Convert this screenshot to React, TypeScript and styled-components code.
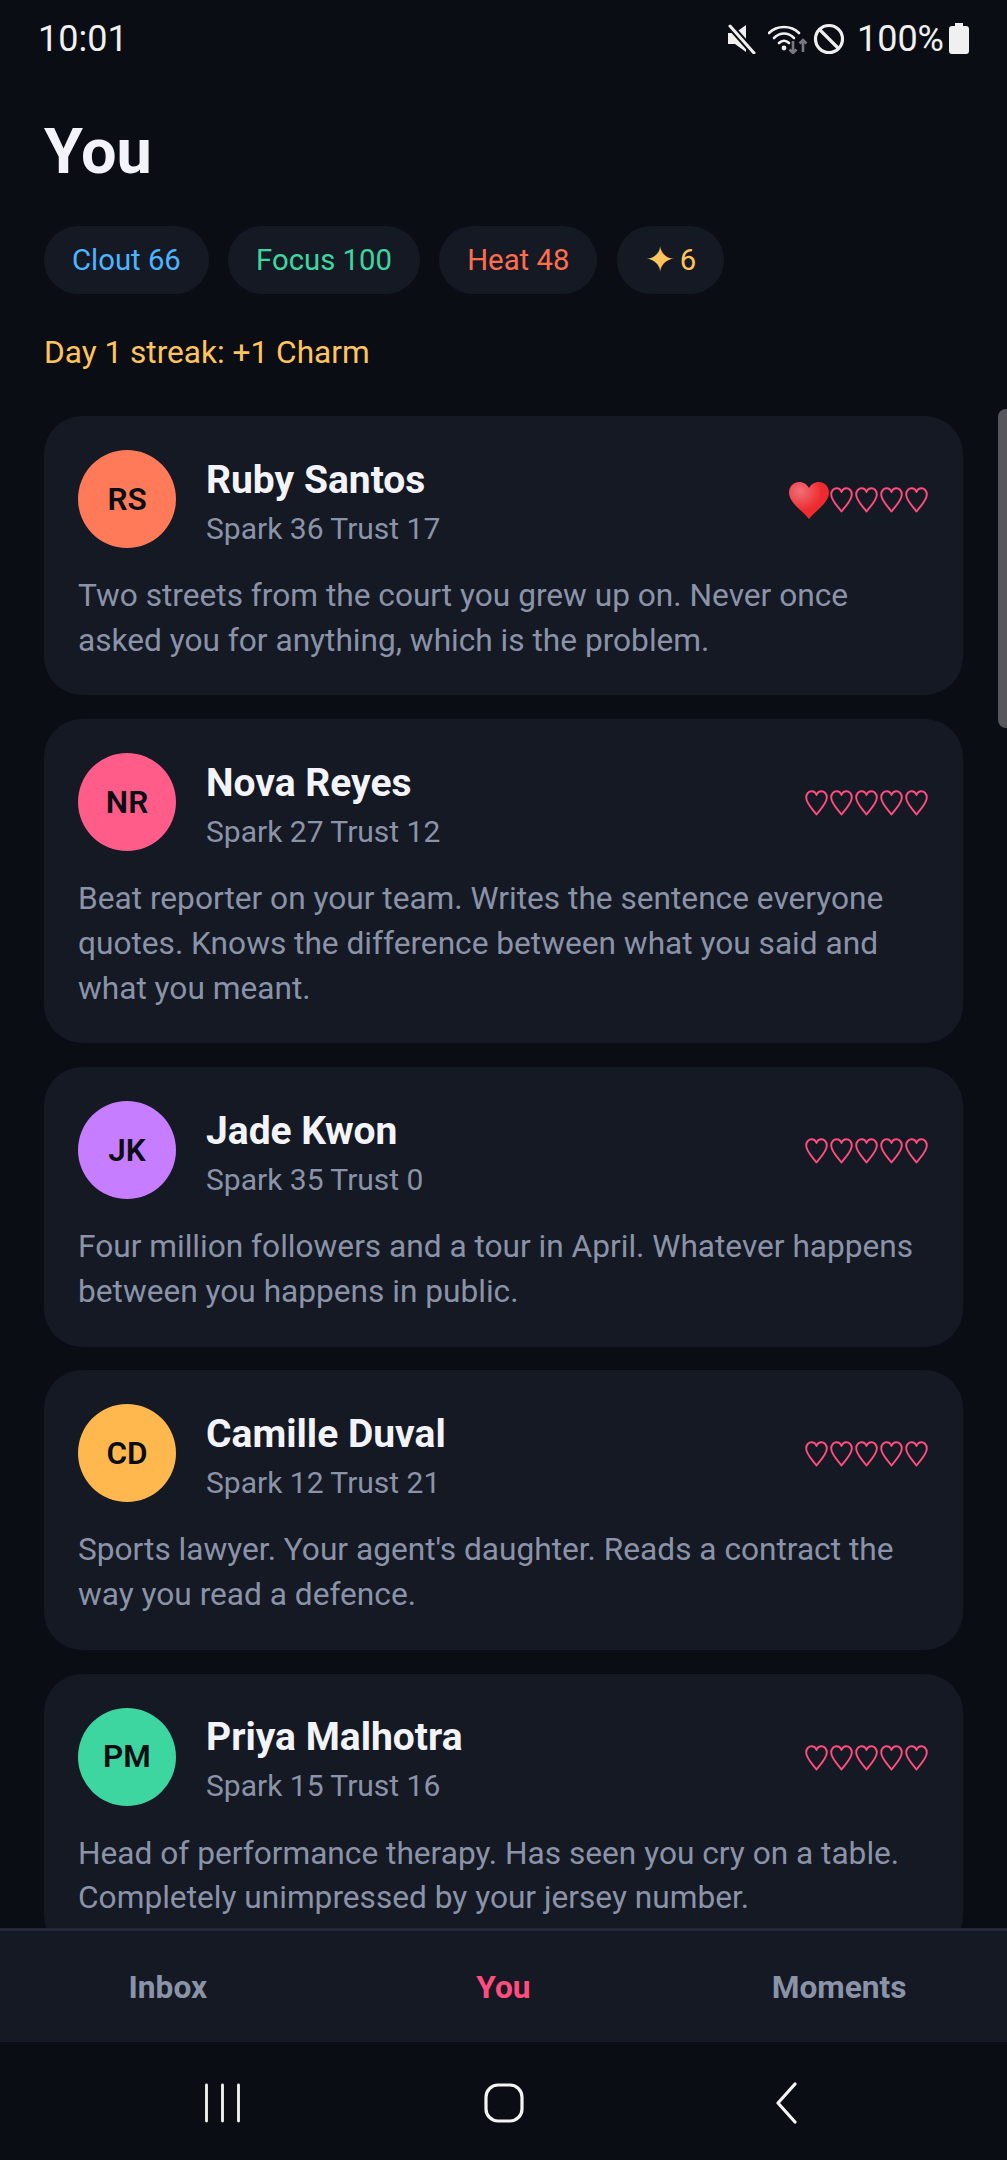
import React from "react";
import styled, { createGlobalStyle } from "styled-components";

const Global = createGlobalStyle`
  html, body { margin: 0; padding: 0; background: #0a0d14; }
  #root { height: 2160px; }
  * { box-sizing: border-box; }
`;

const Screen = styled.div`
  position: relative;
  height: 2160px;
  display: flex;
  flex-direction: column;
  background: #0a0d14;
  font-family: Roboto, "Liberation Sans", sans-serif;
  overflow: hidden;
`;

const StatusBar = styled.div`
  flex: none;
  height: 76px;
  padding: 1px 38px 0 38px;
  display: flex;
  align-items: center;
  justify-content: space-between;
  color: #f0f0f0;
  font-size: 36px;
`;

const StatusRight = styled.div`
  display: flex;
  align-items: center;
`;

const StatusPct = styled.span`
  margin: 0 5px 0 12px;
`;

const Scroll = styled.div`
  flex: 1;
  min-height: 0;
  overflow: hidden;
  padding: 0 44px 0 44px;
`;

const Title = styled.h1`
  margin: 41px 0 0;
  font-size: 63px;
  line-height: 70px;
  font-weight: 700;
  color: #f2f4fa;
`;

const Chips = styled.div`
  margin-top: 39px;
  display: flex;
  gap: 19.25px;
`;

const Chip = styled.div<{ $color: string }>`
  height: 68px;
  padding: 0 28px;
  border-radius: 34px;
  background: #151924;
  color: ${(p) => p.$color};
  font-size: 29.3px;
  display: flex;
  align-items: center;
`;

const Star = styled.span`
  font-size: 36px;
  line-height: 40px;
  margin-right: 5px;
`;

const Streak = styled.div`
  margin-top: 39px;
  color: #ffc45c;
  font-size: 31.6px;
  line-height: 40px;
`;

const Cards = styled.div`
  margin-top: 43px;
  display: flex;
  flex-direction: column;
  gap: 23.8px;
`;

const Card = styled.div`
  padding: 34px 34px 32px;
  background: #151924;
  border-radius: 38px;
`;

const CardHead = styled.div`
  display: flex;
  align-items: center;
  height: 98px;
`;

const Avatar = styled.div<{ $color: string }>`
  flex: none;
  width: 98px;
  height: 98px;
  border-radius: 50%;
  margin-right: 30px;
  background: ${(p) => p.$color};
  color: #0a0d14;
  font-size: 31.5px;
  font-weight: 600;
  display: flex;
  align-items: center;
  justify-content: center;
`;

const Who = styled.div`
  flex: 1;
  min-width: 0;
  padding-top: 6px;
`;

const Name = styled.div`
  color: #f2f4fa;
  font-size: 39px;
  line-height: 48px;
  font-weight: 700;
`;

const Stats = styled.div`
  color: #8a93a8;
  font-size: 30px;
  line-height: 40px;
  margin-top: 5px;
`;

const Hearts = styled.div`
  display: flex;
  align-items: center;
  gap: 2px;
  padding: 2px 1px 0 0;
`;

const Desc = styled.p`
  margin: 26px 0 0;
  color: #8a93a8;
  font-size: 31.65px;
  line-height: 44.7px;
`;

const ScrollThumb = styled.div`
  position: absolute;
  right: 0;
  top: 409px;
  width: 9px;
  height: 319px;
  background: #55575c;
  border-radius: 8px 0 0 8px;
`;

const Tabs = styled.div`
  flex: none;
  height: 114px;
  padding-top: 2px;
  display: grid;
  grid-template-columns: repeat(3, 1fr);
  align-items: center;
  background: #151924;
  border-top: 3px solid #222a3a;
`;

const Tab = styled.div<{ $active?: boolean }>`
  text-align: center;
  font-size: 31.7px;
  font-weight: 700;
  color: ${(p) => (p.$active ? "#ff4d7e" : "#8a93a8")};
`;

const SystemNav = styled.div`
  flex: none;
  height: 118px;
  display: flex;
  align-items: center;
  padding: 4px 0 0 204px;
`;

const NavRecents = styled.svg`
  margin-right: 244px;
`;

const NavHome = styled.svg`
  margin-right: 251px;
`;

const OutlineHeart = () => (
  <svg width="23" height="26" viewBox="0 0 23 26" fill="none">
    <path
      d="M11.5 24.5C8 19.5 1.2 13.5 1.2 7.5C1.2 3.8 3.7 1.3 6.6 1.3C8.8 1.3 10.6 2.6 11.5 5C12.4 2.6 14.2 1.3 16.4 1.3C19.3 1.3 21.8 3.8 21.8 7.5C21.8 13.5 15 19.5 11.5 24.5Z"
      stroke="#ff4d7e"
      strokeWidth="1.9"
      strokeLinejoin="round"
    />
  </svg>
);

const FullHeart = () => (
  <svg width="40" height="37" viewBox="0 0 40 37" style={{ marginRight: -1 }}>
    <defs>
      <radialGradient id="hg" cx="0.28" cy="0.25" r="0.55">
        <stop offset="0" stopColor="#ef6f78" />
        <stop offset="1" stopColor="#ee2a2e" />
      </radialGradient>
    </defs>
    <path
      d="M20 37C15 30 0 21 0 10.5C0 4.5 4.6 0 10.3 0C14.5 0 18 2.3 20 6C22 2.3 25.5 0 29.7 0C35.4 0 40 4.5 40 10.5C40 21 25 30 20 37Z"
      fill="url(#hg)"
    />
  </svg>
);

const people = [
  { i: "RS", c: "#ff7a59", n: "Ruby Santos", s: "Spark 36 Trust 17", f: 1, d: "Two streets from the court you grew up on. Never once asked you for anything, which is the problem." },
  { i: "NR", c: "#ff5c8a", n: "Nova Reyes", s: "Spark 27 Trust 12", f: 0, d: "Beat reporter on your team. Writes the sentence everyone quotes. Knows the difference between what you said and what you meant." },
  { i: "JK", c: "#c77dff", n: "Jade Kwon", s: "Spark 35 Trust 0", f: 0, d: "Four million followers and a tour in April. Whatever happens between you happens in public." },
  { i: "CD", c: "#ffb84d", n: "Camille Duval", s: "Spark 12 Trust 21", f: 0, d: "Sports lawyer. Your agent's daughter. Reads a contract the way you read a defence." },
  { i: "PM", c: "#3dd6a0", n: "Priya Malhotra", s: "Spark 15 Trust 16", f: 0, d: "Head of performance therapy. Has seen you cry on a table. Completely unimpressed by your jersey number." },
];

export default function App() {
  return (
    <Screen>
      <Global />
      <StatusBar>
        <span>10:01</span>
        <StatusRight>
          <svg width="30" height="30" viewBox="0 0 30 30" style={{ marginRight: 11 }}>
            <path d="M1 9h7l11-8v27l-11-8H1z" fill="#f0f0f0" />
            <path d="M3 2l24 27" stroke="#0a0d14" strokeWidth="7" />
            <path d="M3 2l24 27" stroke="#f0f0f0" strokeWidth="3" strokeLinecap="round" />
          </svg>
          <svg width="40" height="30" viewBox="0 0 40 30" fill="none" style={{ marginRight: 5 }}>
            <path d="M1 9C9 1 23 1 31 9" stroke="#f0f0f0" strokeWidth="2.6" strokeLinecap="round" />
            <path d="M6 14C12 8 20 8 26 14" stroke="#f0f0f0" strokeWidth="2.6" strokeLinecap="round" />
            <path d="M11 19C14 16 18 16 21 19" stroke="#f0f0f0" strokeWidth="2.6" strokeLinecap="round" />
            <circle cx="16" cy="24" r="2.4" fill="#f0f0f0" />
            <path d="M25 17v12M21.5 25.5l3.5 3.5 3.5-3.5" stroke="#77797d" strokeWidth="2.6" />
            <path d="M35 28V16M31.5 19.5l3.5-3.5 3.5 3.5" stroke="#77797d" strokeWidth="2.6" />
          </svg>
          <svg width="32" height="32" viewBox="0 0 32 32" fill="none">
            <circle cx="16" cy="16" r="13.5" stroke="#f0f0f0" strokeWidth="3.2" />
            <path d="M6.5 6.5l19 19" stroke="#f0f0f0" strokeWidth="3.2" />
          </svg>
          <StatusPct>100%</StatusPct>
          <svg width="20" height="31" viewBox="0 0 20 31">
            <path d="M6 0h8v3h3a3 3 0 0 1 3 3v22a3 3 0 0 1-3 3H3a3 3 0 0 1-3-3V6a3 3 0 0 1 3-3h3z" fill="#f0f0f0" />
          </svg>
        </StatusRight>
      </StatusBar>
      <Scroll>
        <Title>You</Title>
        <Chips>
          <Chip $color="#4db4ff">Clout 66</Chip>
          <Chip $color="#3dd6a0">Focus 100</Chip>
          <Chip $color="#ff6f4d">Heat 48</Chip>
          <Chip $color="#ffc45c"><Star>✦</Star>6</Chip>
        </Chips>
        <Streak>Day 1 streak: +1 Charm</Streak>
        <Cards>
          {people.map((p) => (
            <Card key={p.i}>
              <CardHead>
                <Avatar $color={p.c}>{p.i}</Avatar>
                <Who>
                  <Name>{p.n}</Name>
                  <Stats>{p.s}</Stats>
                </Who>
                <Hearts>
                  {p.f ? <FullHeart /> : <OutlineHeart />}
                  <OutlineHeart />
                  <OutlineHeart />
                  <OutlineHeart />
                  <OutlineHeart />
                </Hearts>
              </CardHead>
              <Desc>{p.d}</Desc>
            </Card>
          ))}
        </Cards>
      </Scroll>
      <ScrollThumb />
      <Tabs>
        <Tab>Inbox</Tab>
        <Tab $active>You</Tab>
        <Tab>Moments</Tab>
      </Tabs>
      <SystemNav>
        <NavRecents width="36" height="40" viewBox="0 0 36 40" stroke="#f5f5f5" strokeWidth="2.8" strokeLinecap="round">
          <path d="M2.5 2v36M18.5 2v36M34.5 2v36" />
        </NavRecents>
        <NavHome width="40" height="40" viewBox="0 0 40 40" fill="none" stroke="#f5f5f5" strokeWidth="3.2">
          <rect x="2" y="2" width="36" height="36" rx="12" />
        </NavHome>
        <svg width="22" height="42" viewBox="0 0 22 42" fill="none" stroke="#f5f5f5" strokeWidth="3.2" strokeLinecap="round" strokeLinejoin="round">
          <path d="M20 2L3 21l17 19" />
        </svg>
      </SystemNav>
    </Screen>
  );
}
